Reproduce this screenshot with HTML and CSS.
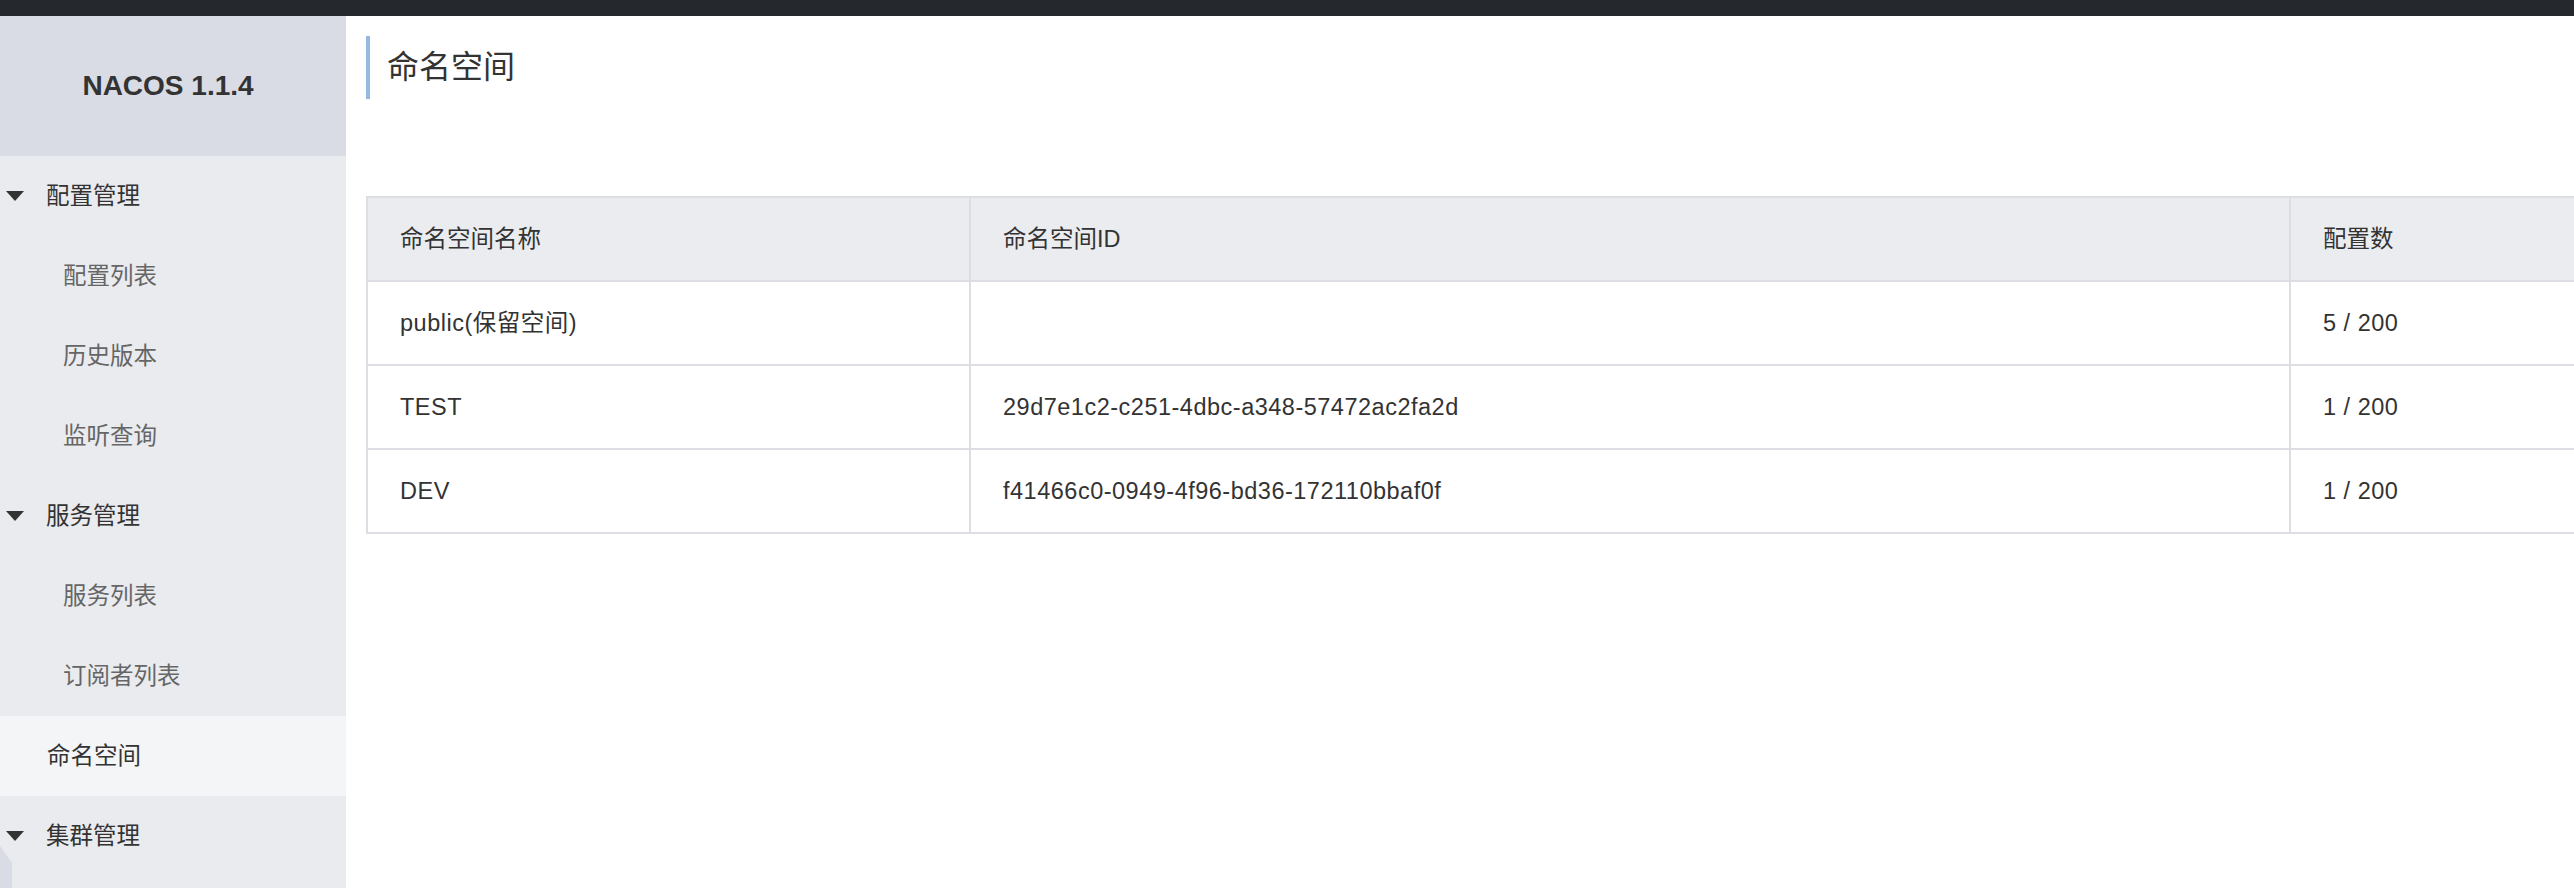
FILE: index.html
```html
<!DOCTYPE html>
<html lang="zh-CN">
<head>
<meta charset="utf-8">
<title>Nacos 命名空间</title>
<link rel="stylesheet" href="styles.css">
</head>
<body>
<div class="topbar"></div>
<div class="layout">
  <aside class="sidebar">
    <div class="logo">NACOS 1.1.4</div>
    <ul class="menu">
      <li class="group"><span class="caret"></span>配置管理</li>
      <li class="sub">配置列表</li>
      <li class="sub">历史版本</li>
      <li class="sub">监听查询</li>
      <li class="group"><span class="caret"></span>服务管理</li>
      <li class="sub">服务列表</li>
      <li class="sub">订阅者列表</li>
      <li class="single active">命名空间</li>
      <li class="group"><span class="caret"></span>集群管理</li>
    </ul>
    <div class="scroll-tab"></div>
  </aside>
  <main class="main">
    <h1 class="page-title">命名空间</h1>
    <table class="ns-table">
      <colgroup>
        <col class="c1"><col class="c2"><col class="c3">
      </colgroup>
      <thead>
        <tr><th>命名空间名称</th><th>命名空间ID</th><th>配置数</th></tr>
      </thead>
      <tbody>
        <tr><td>public(保留空间)</td><td></td><td>5 / 200</td></tr>
        <tr><td>TEST</td><td>29d7e1c2-c251-4dbc-a348-57472ac2fa2d</td><td>1 / 200</td></tr>
        <tr><td>DEV</td><td>f41466c0-0949-4f96-bd36-172110bbaf0f</td><td>1 / 200</td></tr>
      </tbody>
    </table>
  </main>
</div>
</body>
</html>
```

FILE: styles.css
```css
html, body {
  margin: 0;
  padding: 0;
  background: #ffffff;
  overflow: hidden;
}
body {
  font-family: "Liberation Sans", "Noto Sans CJK SC", sans-serif;
  color: #333333;
  width: 2574px;
  height: 888px;
  line-height: 1.3;
}
.topbar {
  height: 16px;
  background: #25282d;
}
.layout {
  display: flex;
  height: 872px;
}
.sidebar {
  position: relative;
  width: 346px;
  flex: 0 0 346px;
  background: #eaebef;
  overflow: hidden;
}
.logo {
  height: 140px;
  background: #d9dce4;
  display: flex;
  align-items: center;
  justify-content: center;
  font-weight: bold;
  font-size: 28px;
  color: #333333;
  padding-right: 10px;
  box-sizing: border-box;
}
.menu {
  list-style: none;
  margin: 0;
  padding: 0;
}
.menu li {
  height: 80px;
  display: flex;
  align-items: center;
  font-size: 23.5px;
  box-sizing: border-box;
}
.menu .group {
  color: #333333;
  padding-left: 6px;
}
.menu .caret {
  width: 0;
  height: 0;
  border-left: 9.5px solid transparent;
  border-right: 9.5px solid transparent;
  border-top: 10px solid #333333;
  margin-right: 22px;
}
.menu .sub {
  color: #666666;
  padding-left: 63px;
}
.menu .single {
  color: #333333;
  padding-left: 47px;
}
.menu .active {
  background: #f4f5f7;
}
.scroll-tab {
  position: absolute;
  left: 0;
  bottom: 0;
  width: 12px;
  height: 42px;
  background: #d9dce4;
  clip-path: polygon(0 0, 100% 40%, 100% 100%, 0 100%);
}
.main {
  flex: 1;
  padding-left: 20px;
  min-width: 0;
  overflow: hidden;
}
.page-title {
  margin: 20px 0 0 0;
  height: 63px;
  border-left: 4px solid #93b8e2;
  padding-left: 17px;
  font-size: 32px;
  font-weight: normal;
  color: #333333;
  display: flex;
  align-items: center;
}
.ns-table {
  margin-top: 97px;
  border-collapse: collapse;
  table-layout: fixed;
  width: 2400px;
  font-size: 23.5px;
  color: #333333;
}
.ns-table col.c1 { width: 603px; }
.ns-table col.c2 { width: 1320px; }
.ns-table col.c3 { width: 477px; }
.ns-table th,
.ns-table td {
  border: 2px solid #dcdee3;
  padding: 0 32px;
  text-align: left;
  font-weight: normal;
  box-sizing: border-box;
  height: 84px;
}
.ns-table th {
  background: #ebecf0;
}
.ns-table td {
  letter-spacing: 0.5px;
}
```
